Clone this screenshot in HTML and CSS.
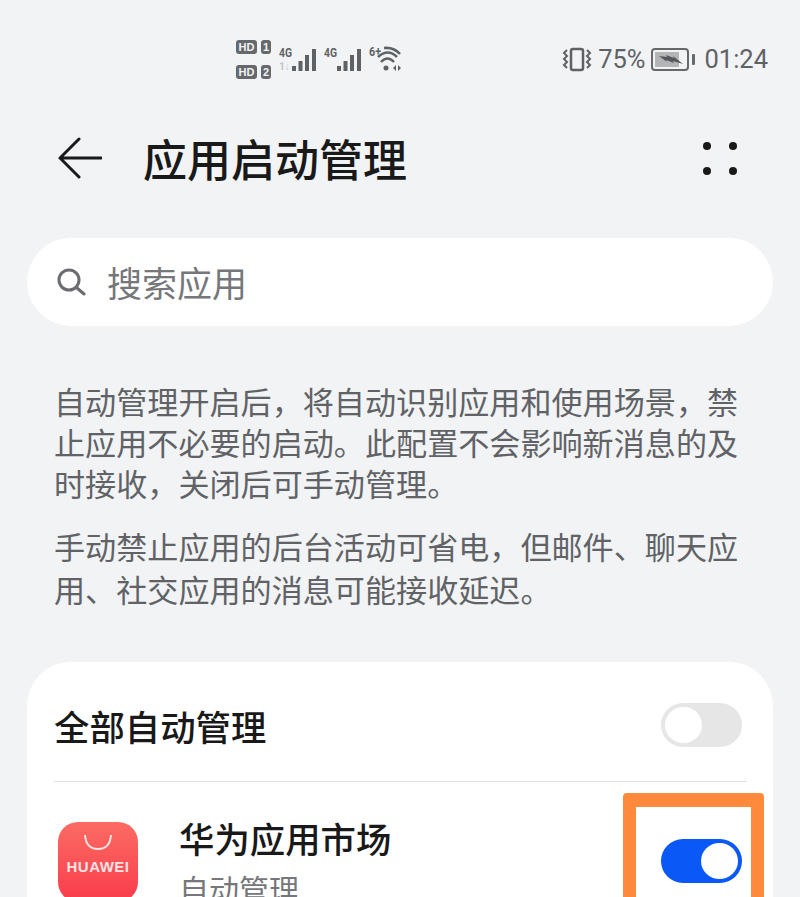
FILE: index.html
```html
<!DOCTYPE html>
<html lang="zh-CN">

<head>
    <meta charset="UTF-8">
    <title>应用启动管理</title>
    <link rel="stylesheet" href="styles.css">
</head>

<body>
    <!-- 状态栏 -->
    <div class="status">
        <div class="status-left">
            <div class="sims">
                <div class="sim"><span class="hd">HD</span><span class="num">1</span></div>
                <div class="sim"><span class="hd">HD</span><span class="num">2</span></div>
            </div>
            <svg class="signal" width="37" height="26" viewBox="0 0 37 26">
                <text x="0" y="11" class="tiny" textLength="13" lengthAdjust="spacingAndGlyphs">4G</text>
                <text x="0" y="24" class="tiny faint" textLength="11" lengthAdjust="spacingAndGlyphs">1↓</text>
                <rect x="13" y="20" width="4" height="5" />
                <rect x="19.500" y="15" width="4" height="10" />
                <rect x="26" y="9" width="4" height="16" />
                <rect x="33" y="3" width="4" height="22" />
            </svg>
            <svg class="signal" width="37" height="26" viewBox="0 0 37 26">
                <text x="0" y="11" class="tiny" textLength="13" lengthAdjust="spacingAndGlyphs">4G</text>
                <rect x="13" y="20" width="4" height="5" />
                <rect x="19.500" y="15" width="4" height="10" />
                <rect x="26" y="9" width="4" height="16" />
                <rect x="33" y="3" width="4" height="22" />
            </svg>
            <svg class="wifi" width="36" height="28" viewBox="0 0 36 28">
                <text x="0" y="11" class="tiny" textLength="12" lengthAdjust="spacingAndGlyphs">6+</text>
                <path d="M15 3 Q25 2 31 9" />
                <path d="M9 12 Q19 3 28 12" />
                <path d="M12 17 Q18.500 10 25 17" />
                <circle cx="17" cy="23" r="2.500" class="dot" />
                <path d="M27 20 L24 23 L27 26 Z M29 20 L32 23 L29 26 Z" class="dot" />
            </svg>
        </div>
        <div class="status-right">
            <svg class="vibrate" width="30" height="26" viewBox="0 0 30 26">
                <rect x="9" y="3" width="12" height="21" rx="2" />
                <path d="M5 4 L2 7 L5 10 L2 13 L5 16 L2 19 L5 22 M25 4 L28 7 L25 10 L28 13 L25 16 L28 19 L25 22" class="thin" />
            </svg>
            <span class="percent">75%</span>
            <svg class="battery" width="44" height="26" viewBox="0 0 44 26">
                <rect x="1" y="3" width="36" height="21" rx="3" class="shell" />
                <rect x="4" y="6" width="24" height="15" fill="#b4b5b7" />
                <path d="M8 10 L16 11 L15 9 L23 12 L22 10 L32 18 L22 15 L23 17 L15 14 L16 16 Z" fill="#55585b" />
                <rect x="41" y="8" width="3" height="11" rx="1" fill="#66696c" />
            </svg>
            <span class="time">01:24</span>
        </div>
    </div>

    <!-- 标题栏 -->
    <div class="header">
        <svg class="back" width="44" height="42" viewBox="0 0 44 42">
            <path d="M43 21 H2 M21 2 L2 21 L21 40" />
        </svg>
        <h1 class="title">应用启动管理</h1>
        <div class="more"><i></i><i></i><i></i><i></i></div>
    </div>

    <!-- 搜索框 -->
    <div class="search">
        <svg width="30" height="30" viewBox="0 0 30 30">
            <circle cx="12" cy="14" r="10" />
            <path d="M20 22 L27 28" />
        </svg>
        <span>搜索应用</span>
    </div>

    <!-- 说明 -->
    <p class="desc">自动管理开启后，将自动识别应用和使用场景，禁止应用不必要的启动。此配置不会影响新消息的及时接收，关闭后可手动管理。</p>
    <p class="desc second">手动禁止应用的后台活动可省电，但邮件、聊天应用、社交应用的消息可能接收延迟。</p>

    <!-- 列表 -->
    <div class="card">
        <div class="row all">
            <div class="row-name">全部自动管理</div>
            <div class="switch"></div>
        </div>
        <div class="line"></div>
        <div class="row app">
            <div class="app-icon">
                <svg width="30" height="18" viewBox="0 0 30 18">
                    <path d="M2 1 Q3 15 15 15 Q27 15 28 1" />
                </svg>
                <span>HUAWEI</span>
            </div>
            <div class="app-text">
                <div class="row-name">华为应用市场</div>
                <div class="row-sub">自动管理</div>
            </div>
            <div class="switch on"></div>
            <div class="mark"></div>
        </div>
    </div>
</body>

</html>
```

FILE: styles.css
```css
* {
    margin: 0;
    padding: 0;
    box-sizing: border-box;
}

html,
body {
    height: 897px;
    overflow: hidden;
}

body {
    background-color: #f1f3f5;
    font-family: "Noto Sans CJK SC", "Noto Sans", sans-serif;
    color: #191919;
}

/* 状态栏 */
.status {
    height: 120px;
    padding: 36px 32px 0 236px;
    display: flex;
    justify-content: space-between;
    align-items: flex-start;
    color: #5f6265;
}

.status-left {
    display: flex;
    gap: 8px;
    align-items: center;
    height: 46px;
}

.status-left svg {
    fill: #5f6265;
}

.sims {
    display: flex;
    flex-direction: column;
    gap: 11px;
}

.sim {
    display: flex;
    gap: 4px;
}

.hd,
.num {
    height: 14px;
    background-color: #66696c;
    color: #f1f3f5;
    font: bold 11px/14px "Liberation Sans", sans-serif;
    border-radius: 3px;
    text-align: center;
}

.hd {
    width: 21px;
}

.num {
    width: 10px;
}

.tiny {
    font: bold 13px "Roboto", sans-serif;
    fill: #5f6265;
}

.faint {
    font-size: 10px;
    fill: #c2c4c6;
}

.wifi path {
    fill: none;
    stroke: #5f6265;
    stroke-width: 2.500;
}

.wifi .dot {
    fill: #5f6265;
    stroke: none;
}

.status-right {
    display: flex;
    align-items: center;
    height: 46px;
    font: 25.500px "Roboto", sans-serif;
}

.vibrate {
    margin-left: -2px;
}

.vibrate rect,
.vibrate path {
    fill: none;
    stroke: #5f6265;
    stroke-width: 2.500;
}

.vibrate .thin {
    stroke-width: 2;
}

.percent {
    margin-left: 6px;
}

.battery {
    margin-left: 6px;
}

.battery .shell {
    fill: none;
    stroke: #66696c;
    stroke-width: 2;
}

.time {
    margin-left: 9px;
}

/* 标题栏 */
.header {
    height: 80px;
    padding: 0 63px 4px 58px;
    display: flex;
    align-items: center;
}

.back {
    flex: none;
}

.back path {
    fill: none;
    stroke: #191919;
    stroke-width: 3;
    stroke-linecap: round;
}

.title {
    margin-left: 41px;
    flex: 1;
    font-size: 44px;
    font-weight: 500;
    line-height: 76px;
}

.more {
    display: grid;
    grid-template-columns: 8px 8px;
    gap: 17px 18px;
}

.more i {
    width: 8px;
    height: 8px;
    border-radius: 50%;
    background-color: #191919;
}

/* 搜索框 */
.search {
    height: 88px;
    margin: 38px 27px 0;
    padding: 0 0 2px 30px;
    display: flex;
    align-items: center;
    gap: 20px;
    background-color: #fff;
    border-radius: 44px;
    color: #75777a;
}

.search svg {
    flex: none;
}

.search circle,
.search path {
    fill: none;
    stroke: #6a6c6f;
    stroke-width: 3;
    stroke-linecap: round;
}

.search span {
    font-size: 35px;
}

/* 说明 */
.desc {
    margin: 54px 54px 0;
    font-size: 31.100px;
    line-height: 41px;
    color: #606265;
}

.second {
    margin-top: 21px;
    line-height: 43px;
}

/* 列表 */
.card {
    margin: 52px 27px 0;
    padding: 0 27px;
    height: 300px;
    background-color: #fff;
    border-radius: 44px;
}

.row {
    display: flex;
    align-items: center;
    position: relative;
}

.all {
    height: 119px;
    padding-top: 6px;
}

.row-name {
    font-size: 35.400px;
    font-weight: 500;
    line-height: 46px;
    flex: 1;
}

.all .row-name {
    margin-top: 2px;
}

.line {
    height: 1px;
    margin-right: -1px;
    background-color: #dfe0e1;
}

.switch {
    flex: none;
    width: 81px;
    height: 44px;
    margin-right: 4px;
    padding: 4px;
    border-radius: 22px;
    background-color: #e6e6e6;
    display: flex;
}

.switch::after {
    content: "";
    width: 37px;
    height: 36px;
    border-radius: 50%;
    background-color: #fff;
}

.on {
    background-color: #0a59f7;
    justify-content: flex-end;
}

.app {
    align-items: flex-start;
    padding-top: 40px;
}

.app-icon {
    flex: none;
    width: 80px;
    height: 80px;
    margin-left: 4px;
    padding-top: 12px;
    border-radius: 20px;
    background: linear-gradient(#fb6b63, #fa3c4c);
    display: flex;
    flex-direction: column;
    align-items: center;
    color: #fde3e3;
}

.app-icon svg {
    flex: none;
}

.app-icon path {
    fill: none;
    stroke: #fde3e3;
    stroke-width: 2;
}

.app-icon span {
    margin-top: 7px;
    font: bold 15px/16px "Liberation Sans", sans-serif;
    letter-spacing: 0.500px;
}

.app-text {
    flex: 1;
    margin-left: 41px;
    margin-top: -7px;
}

.row-sub {
    margin-top: 7px;
    font-size: 30px;
    line-height: 40px;
    color: #75777a;
}

.app .switch {
    margin-top: 17px;
}

/* 橙色标记框，压在开关上面 */
.mark {
    position: absolute;
    left: 569px;
    top: 11px;
    width: 141px;
    height: 200px;
    border: 13px solid #ff8a3c;
    border-top-width: 14px;
    border-radius: 4px;
}
```
